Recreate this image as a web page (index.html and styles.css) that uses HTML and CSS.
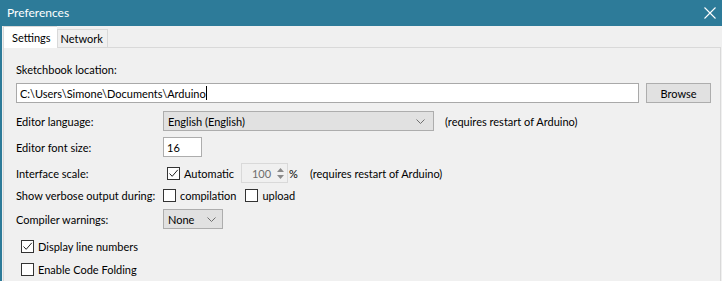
FILE: index.html
```html
<!DOCTYPE html>
<html>
<head>
<meta charset="utf-8">
<link rel="stylesheet" href="styles.css">
</head>
<body>
<div class="window">
  <div class="titlebar">
    <span class="title">Preferences</span>
    <svg class="close" width="12" height="12" viewBox="0 0 12 12"><path d="M0.5 0.5 L11.5 11.5 M11.5 0.5 L0.5 11.5" stroke="#fff" stroke-width="1.1" fill="none"/></svg>
  </div>
  <div class="client">
    <div class="tabs">
      <div class="tab active">Settings</div>
      <div class="tab">Network</div>
    </div>
    <div class="panel">
      <div class="label-top">Sketchbook location:</div>
      <div class="path-row">
        <div class="field path">C:\Users\Simone\Documents\Arduino<span class="caret"></span></div>
        <div class="button">Browse</div>
      </div>
      <div class="row r-lang">
        <div class="label">Editor language:</div>
        <div class="select lang"><span>English (English)</span><svg class="chev" width="9" height="5" viewBox="0 0 9 5"><path d="M0.5 0.5 L4.5 4.5 L8.5 0.5" stroke="#6f6f6f" fill="none"/></svg></div>
        <span class="note">(requires restart of Arduino)</span>
      </div>
      <div class="row r-font">
        <div class="label">Editor font size:</div>
        <div class="field size">16</div>
      </div>
      <div class="row r-scale">
        <div class="label">Interface scale:</div>
        <span class="check checked"><svg width="11" height="11" viewBox="0 0 11 11"><path d="M1.5 5.5 L4.2 8.3 L9.8 1.8" stroke="#222" stroke-width="1" fill="none"/></svg></span>
        <span class="check-label">Automatic</span>
        <div class="spinner">
          <span class="spin-val">100</span>
          <span class="spin-arrows">
            <svg width="7" height="4" viewBox="0 0 7 4"><path d="M0 4 L3.5 0 L7 4 Z" fill="#8a8a8a"/></svg>
            <svg width="7" height="4" viewBox="0 0 7 4"><path d="M0 0 L3.5 4 L7 0 Z" fill="#8a8a8a"/></svg>
          </span>
        </div>
        <span class="pct">%</span>
        <span class="note note2">(requires restart of Arduino)</span>
      </div>
      <div class="row r-verbose">
        <div class="label">Show verbose output during:</div>
        <span class="check"></span>
        <span class="check-label">compilation</span>
        <span class="check check-gap"></span>
        <span class="check-label">upload</span>
      </div>
      <div class="row r-warn">
        <div class="label">Compiler warnings:</div>
        <div class="select warn"><span>None</span><svg class="chev" width="9" height="5" viewBox="0 0 9 5"><path d="M0.5 0.5 L4.5 4.5 L8.5 0.5" stroke="#6f6f6f" fill="none"/></svg></div>
      </div>
      <div class="row r-lines">
        <span class="check checked"><svg width="11" height="11" viewBox="0 0 11 11"><path d="M1.5 5.5 L4.2 8.3 L9.8 1.8" stroke="#222" stroke-width="1" fill="none"/></svg></span>
        <span class="check-label">Display line numbers</span>
      </div>
      <div class="row r-fold">
        <span class="check"></span>
        <span class="check-label">Enable Code Folding</span>
      </div>
    </div>
  </div>
</div>
</body>
</html>
```

FILE: styles.css
```css
* { box-sizing: border-box; }
html, body {
  margin: 0;
  padding: 0;
  width: 722px;
  height: 281px;
  overflow: hidden;
  background: #f0f0f0;
  font-family: Lato, "Noto Sans", sans-serif;
  font-size: 11px;
  color: #000;
  white-space: nowrap;
}
.window {
  width: 722px;
  height: 281px;
  border-left: 2px solid #2d7b99;
  display: flex;
  flex-direction: column;
}
.titlebar {
  height: 26px;
  flex: none;
  background: #2d7b99;
  display: flex;
  align-items: center;
  justify-content: space-between;
  padding: 0 6px 0 5px;
  color: #fff;
}
.title {
  font-size: 12px;
  margin-top: -1px;
}
.client {
  flex: 1;
  padding-left: 1px;
  display: flex;
  flex-direction: column;
}
.tabs {
  display: flex;
  align-items: flex-end;
  height: 21px;
  padding-top: 1px;
  position: relative;
  z-index: 1;
}
.tab {
  height: 18px;
  padding: 0 4px 0 3px;
  border: 1px solid #d9d9d9;
  border-bottom: none;
  background: #f0f0f0;
  display: flex;
  align-items: center;
}
.tab.active {
  background: #fff;
  padding: 0 6px 0 8px;
  border-right: none;
  margin-bottom: -1px;
  height: 22px;
}
.panel {
  flex: 1;
  border: 1px solid #d9d9d9;
  border-bottom: none;
  margin-right: 1px;
  padding: 0 0 0 12px;
  display: flex;
  flex-direction: column;
}
.label-top {
  margin-top: 14px;
  height: 16px;
  line-height: 16px;
}
.path-row {
  margin-top: 5px;
  display: flex;
  align-items: center;
  height: 20px;
}
.field {
  background: #fff;
  border: 1px solid #adadad;
  height: 20px;
  display: flex;
  align-items: center;
  padding-left: 3px;
}
.path {
  width: 623px;
  border-color: #a9a9a9;
}
.caret {
  display: inline-block;
  width: 1px;
  height: 14px;
  background: #000;
}
.button {
  margin-left: 7px;
  width: 65px;
  height: 20px;
  background: #e1e1e1;
  border: 1px solid #adadad;
  display: flex;
  align-items: center;
  justify-content: center;
}
.row {
  display: flex;
  align-items: center;
}
.label {
  width: 147px;
  flex: none;
}
.r-lang { margin-top: 8px; height: 20px; }
.select {
  background: #e1e1e1;
  border: 1px solid #adadad;
  height: 20px;
  display: flex;
  align-items: center;
  justify-content: space-between;
  padding: 0 8px 0 4px;
}
.lang { width: 271px; }
.chev { margin-top: 1px; }
.note { margin-left: 11px; }
.r-font { margin-top: 6px; height: 20px; }
.size { width: 39px; }
.r-scale { margin-top: 5px; height: 22px; }
.check {
  width: 13px;
  height: 13px;
  border: 1px solid #333;
  background: #fff;
  display: inline-flex;
  align-items: center;
  justify-content: center;
  flex: none;
}
.r-scale .check { margin-left: 4px; }
.check-label { margin-left: 4px; }
.spinner {
  margin-left: 7px;
  width: 47px;
  height: 20px;
  border: 1px solid #d9d9d9;
  background: #f0f0f0;
  display: flex;
  align-items: center;
  justify-content: flex-end;
}
.spin-val { color: #6d6d6d; margin-right: 3px; }
.spin-arrows {
  width: 13px;
  height: 18px;
  display: flex;
  flex-direction: column;
  align-items: center;
  justify-content: center;
  gap: 3px;
}
.pct { margin-left: 1px; }
.note2 { margin-left: 12px; }
.r-verbose { margin-top: 0; height: 22px; }
.check-gap { margin-left: 9px; }
.r-warn { margin-top: 3px; height: 20px; }
.warn { width: 60px; padding-right: 6px; }
.r-lines { margin-top: 6px; height: 22px; padding-left: 5px; }
.r-fold { margin-top: 1px; height: 22px; padding-left: 5px; }
```
